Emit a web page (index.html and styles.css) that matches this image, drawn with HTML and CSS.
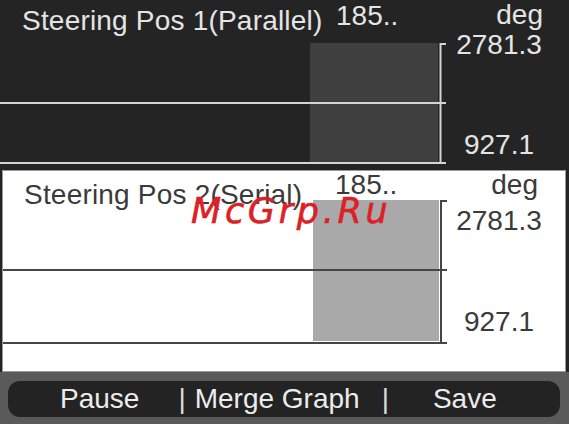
FILE: index.html
```html
<!DOCTYPE html>
<html>
<head>
<meta charset="utf-8">
<link rel="stylesheet" href="styles.css">
</head>
<body>
<div class="screen">
  <section class="panel panel-dark">
    <div class="plot-col">
      <div class="head">
        <span class="title">Steering Pos 1(Parallel)</span>
        <span class="value">185..</span>
      </div>
      <svg class="plot" width="450" height="124" viewBox="0 0 450 124">
        <rect x="310" y="0" width="128" height="119" fill="#3f3f3f"/>
        <line x1="0" y1="60" x2="446" y2="60" stroke="#d4d4d4" stroke-width="2"/>
        <line x1="0" y1="120" x2="446" y2="120" stroke="#d4d4d4" stroke-width="2"/>
        <line x1="440.5" y1="0" x2="440.5" y2="121" stroke="#d4d4d4" stroke-width="2"/>
        <line x1="440" y1="1" x2="446" y2="1" stroke="#d4d4d4" stroke-width="2"/>
      </svg>
    </div>
    <div class="scale">
      <span class="unit">deg</span>
      <span class="max">2781.3</span>
      <span class="min">927.1</span>
    </div>
  </section>

  <section class="panel panel-light">
    <div class="plot-col">
      <div class="head">
        <span class="title">Steering Pos 2(Serial)</span>
        <span class="value">185..</span>
      </div>
      <svg class="plot" width="447" height="146" viewBox="0 0 447 146">
        <rect x="310" y="0" width="126" height="141" fill="#a9a9a9"/>
        <line x1="0" y1="70" x2="444" y2="70" stroke="#454545" stroke-width="2"/>
        <line x1="0" y1="143" x2="444" y2="143" stroke="#454545" stroke-width="2"/>
        <line x1="438" y1="0" x2="438" y2="144" stroke="#454545" stroke-width="2"/>
        <line x1="438" y1="1" x2="444" y2="1" stroke="#454545" stroke-width="2"/>
      </svg>
    </div>
    <div class="scale">
      <span class="unit">deg</span>
      <span class="max">2781.3</span>
      <span class="min">927.1</span>
    </div>
  </section>

  <footer class="toolbar">
    <div class="pill">
      <span class="btn btn-pause">Pause</span>
      <span class="sep sep-1">|</span>
      <span class="btn btn-merge">Merge Graph</span>
      <span class="sep sep-2">|</span>
      <span class="btn btn-save">Save</span>
    </div>
  </footer>

  <div class="watermark">McGrp.Ru</div>
</div>
</body>
</html>
```

FILE: styles.css
```css
* { box-sizing: border-box; }

html, body {
  margin: 0;
  padding: 0;
  background: #242424;
}

body {
  font-family: "Liberation Sans", Arial, sans-serif;
  font-size: 28px;
  line-height: 28px;
}

.screen {
  position: relative;
  width: 569px;
  height: 424px;
  overflow: hidden;
  display: flex;
  flex-direction: column;
}

.panel {
  display: grid;
  grid-template-columns: 447px 98px;
  white-space: nowrap;
}

.panel-dark {
  height: 170px;
  color: #e4e4e4;
  grid-template-columns: 450px 98px;
}

.panel-light {
  height: 202px;
  margin-left: 2px;
  width: 564px;
  background: #ffffff;
  border: 1px solid #9a9a9a;
  color: #3a3a3a;
}

.plot-col {
  display: flex;
  flex-direction: column;
}

.head {
  display: flex;
  align-items: flex-start;
}

.panel-dark .head { height: 43px; }
.panel-light .head { height: 29px; }

.title {
  display: block;
  letter-spacing: 0.2px;
}

.panel-dark .title {
  width: 336px;
  padding-left: 22px;
  padding-top: 7px;
}

.panel-light .title {
  width: 332px;
  padding-left: 21px;
  padding-top: 10px;
}

.value {
  display: block;
  padding-top: 2px;
}

.panel-light .value { padding-top: 0; }

.plot { display: block; }

.scale {
  display: flex;
  flex-direction: column;
  align-items: center;
}

.unit {
  align-self: flex-end;
}

.panel-dark .unit { padding-right: 5px; padding-top: 1px; }
.panel-light .unit { padding-right: 10px; }

.panel-dark .max { margin-top: 2px; }
.panel-dark .min { margin-top: 72px; }

.panel-light .max { margin-top: 8px; }
.panel-light .min { margin-top: 73px; }

.toolbar {
  flex: 1;
  background: #5a5a5a;
  padding: 9px 9px 0 8px;
}

.pill {
  height: 36px;
  background: #232323;
  border-radius: 12px;
  display: flex;
  color: #ececec;
  line-height: 36px;
  padding-left: 52px;
  white-space: nowrap;
}

.sep { color: #dcdcdc; }
.sep-1 { margin-left: 39px; }
.btn-merge { margin-left: 9px; }
.sep-2 { margin-left: 22px; }
.btn-save { margin-left: 44px; }

.watermark {
  position: absolute;
  left: 191px;
  top: 194px;
  font-family: "DejaVu Sans", Verdana, sans-serif;
  font-style: italic;
  font-size: 35px;
  line-height: 35px;
  letter-spacing: 3.7px;
  -webkit-text-stroke: 0.6px #dd1f26;
  color: #dd1f26;
  white-space: nowrap;
}
```
